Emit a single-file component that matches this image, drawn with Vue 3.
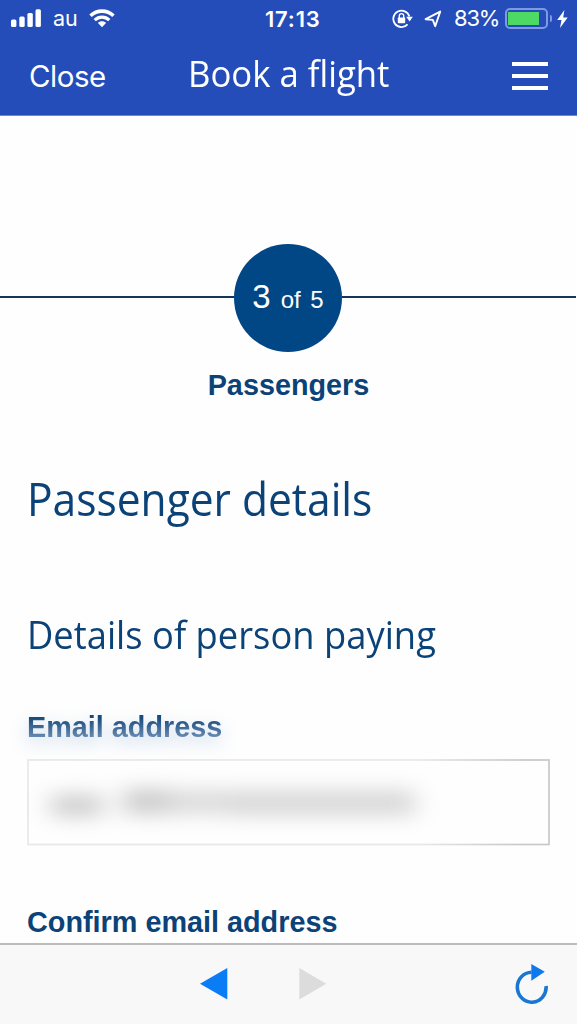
<script setup>
const step = 3
const totalSteps = 5
const battery = 83
</script>

<template>
  <div class="phone">
    <header class="header">
      <div class="status">
        <div class="status-left">
          <svg class="signal" width="31" height="19" viewBox="0 0 31 19">
            <rect x="0" y="10.5" width="5.4" height="7.5" rx="1.5" fill="#fff" />
            <rect x="8.3" y="7.5" width="5.4" height="10.5" rx="1.5" fill="#fff" />
            <rect x="16.4" y="4" width="5.4" height="14" rx="1.5" fill="#fff" />
            <rect x="24.5" y="0.3" width="5.4" height="17.7" rx="1.5" fill="#fff" />
          </svg>
          <span class="carrier">au</span>
          <svg class="wifi" width="26" height="19" viewBox="0 0 26 19">
            <path d="M1.5 6.8C8 .6 18 .6 24.5 6.8" fill="none" stroke="#fff" stroke-width="3.6" />
            <path d="M5.7 11.2c4.2-4 10.4-4 14.6 0" fill="none" stroke="#fff" stroke-width="3.2" />
            <path d="M13 18.2l-4.2-4.4c2.4-2.1 6-2.1 8.4 0z" fill="#fff" />
          </svg>
        </div>
        <span class="time">17:13</span>
        <div class="status-right">
          <svg width="21" height="20" viewBox="0 0 21 20">
            <path d="M17.4 7.6A8.2 8.2 0 1 0 15.6 15.4" fill="none" stroke="#fff" stroke-width="1.8" />
            <path d="M14.2 7.8h6.6l-3.2 4.6z" fill="#fff" />
            <rect x="5.8" y="8.4" width="7.4" height="5.8" rx="0.8" fill="#fff" />
            <path d="M7.3 9V6.8a2.2 2.2 0 0 1 4.4 0V9" fill="none" stroke="#fff" stroke-width="1.4" />
          </svg>
          <svg class="location" width="18" height="18" viewBox="0 0 18 18">
            <path d="M1.6 9.2L16.2 1.6 11.2 16.2 8.8 9.9z" fill="none" stroke="#fff" stroke-width="1.9" stroke-linejoin="round" />
          </svg>
          <span class="percent">{{ battery }}%</span>
          <div class="battery">
            <div class="level" :style="{ width: battery + '%' }"></div>
          </div>
          <i class="cap"></i>
          <svg class="bolt" width="11" height="18" viewBox="0 0 11 18">
            <path d="M7.4 0L.2 10h4.3L3 18l7.7-10.6H6.2z" fill="#fff" />
          </svg>
        </div>
      </div>
      <nav class="nav">
        <a class="close">Close</a>
        <h1 class="title"><span>Book a flight</span></h1>
        <div class="menu"><i></i><i></i><i></i></div>
      </nav>
    </header>

    <main class="content">
      <div class="progress">
        <div class="line"></div>
        <div class="circle">
          <span class="current">{{ step }}</span>
          <span class="total">of {{ totalSteps }}</span>
        </div>
        <div class="line"></div>
      </div>
      <p class="step-name"><span>Passengers</span></p>
      <h2><span>Passenger details</span></h2>
      <h3><span>Details of person paying</span></h3>
      <label class="email-label"><span>Email address</span></label>
      <div class="field">
        <svg width="523" height="87" viewBox="0 0 523 87">
          <defs>
            <linearGradient id="edge" gradientUnits="userSpaceOnUse" x1="0" y1="0" x2="523" y2="0">
              <stop offset="0" stop-color="#e8e8e8" />
              <stop offset="0.75" stop-color="#e8e8e8" />
              <stop offset="0.88" stop-color="#d2d2d2" />
              <stop offset="0.95" stop-color="#c8c8c8" />
              <stop offset="1" stop-color="#c8c8c8" />
            </linearGradient>
            <filter id="soft" x="-20%" y="-200%" width="140%" height="500%">
              <feGaussianBlur stdDeviation="12 10" />
            </filter>
          </defs>
          <rect x="1" y="1" width="521" height="84.5" fill="#fefefe" stroke="url(#edge)" stroke-width="1.7" />
          <g filter="url(#soft)" fill="#000">
            <rect x="24" y="36" width="52" height="21" opacity="0.2" />
            <rect x="96" y="30" width="46" height="25" opacity="0.2" />
            <rect x="142" y="31" width="60" height="24" opacity="0.14" />
            <rect x="202" y="31" width="186" height="26" opacity="0.15" />
          </g>
        </svg>
      </div>
      <label class="confirm-label"><span>Confirm email address</span></label>
    </main>

    <footer class="toolbar">
      <svg class="back" width="28" height="32" viewBox="0 0 28 32">
        <path d="M27.3 0v31.5L0 15.7z" fill="#0a7cf6" />
      </svg>
      <svg class="forward" width="28" height="32" viewBox="0 0 28 32">
        <path d="M.3 0v31.5L27.3 15.7z" fill="#dcdcdc" />
      </svg>
      <svg class="reload" width="34" height="40" viewBox="0 0 34 40">
        <path d="M16.5 8.2A14.4 15 0 1 0 31.1 22" fill="none" stroke="#1976d2" stroke-width="3.6" />
        <path d="M16.3 0v16.8L29.8 7.8z" fill="#0f78ec" />
      </svg>
    </footer>
  </div>
</template>

<style>
body {
  background: #fff;
}
</style>

<style scoped>
.phone {
  width: 577px;
  height: 1024px;
  overflow: hidden;
  display: flex;
  flex-direction: column;
  background: #fefefe;
  color: #0b4378;
  font-family: "Liberation Sans", Arial, sans-serif;
}
svg {
  display: block;
  flex: none;
}
h1, h2, h3, p {
  margin: 0;
  font-weight: normal;
}
.header {
  height: 116px;
  box-sizing: border-box;
  border-bottom: 1px solid #6f86c4;
  background: #244dba;
  color: #fff;
}
.status {
  height: 37px;
  display: grid;
  grid-template-columns: 1fr auto 1fr;
  align-items: center;
  font-family: Inter, sans-serif;
}
.status-left {
  display: flex;
  align-items: center;
  padding-left: 11px;
}
.carrier {
  font-size: 21.5px;
  margin-left: 11px;
  width: 25px;
  padding-bottom: 1px;
}
.wifi {
  margin-left: 11px;
}
.time {
  font-size: 22px;
  font-weight: 600;
  width: 56px;
  margin-left: 9px;
  letter-spacing: 0.8px;
  line-height: 36px;
  white-space: nowrap;
}
.status-right {
  display: flex;
  align-items: center;
  justify-content: flex-end;
  padding-right: 9px;
}
.location {
  margin-left: 11px;
}
.percent {
  font-size: 22px;
  letter-spacing: -1.2px;
  width: 45px;
  margin: 0 6px 0 12px;
  padding-bottom: 1px;
}
.battery {
  width: 43px;
  height: 21px;
  box-sizing: border-box;
  border: 2px solid #7f9ae2;
  border-radius: 5px;
  padding: 2px 1px;
}
.level {
  height: 13px;
  background: #4cd964;
}
.cap {
  width: 2px;
  height: 7px;
  margin: 0 5px 0 2px;
  border-radius: 0 3px 3px 0;
  background: #7f9ae2;
}
.nav {
  height: 77px;
  display: flex;
  align-items: center;
}
.close {
  width: 159px;
  padding-left: 29px;
  font-family: Inter, sans-serif;
  font-size: 29.5px;
  letter-spacing: -0.5px;
}
.title {
  flex: 1;
  font-family: "Open Sans", sans-serif;
  font-size: 37px;
  line-height: 64px;
  padding-bottom: 6px;
}
.title span, h2 span, h3 span {
  display: inline-block;
  white-space: nowrap;
  transform-origin: left;
}
.title span {
  transform: scaleX(0.938);
}
.menu {
  width: 36px;
  margin-right: 29px;
  display: grid;
  gap: 8px;
}
.menu i {
  height: 4px;
  background: #fff;
}
.content {
  height: 827px;
  overflow: hidden;
}
.progress {
  margin-top: 127.5px;
  display: flex;
  align-items: center;
  padding-right: 1px;
}
.line {
  flex: 1;
  height: 2px;
  margin-bottom: 2px;
  background: #14355f;
}
.circle {
  width: 108px;
  height: 108px;
  border-radius: 50%;
  background: #014785;
  color: #fff;
  display: flex;
  align-items: baseline;
  justify-content: center;
  gap: 10px;
  line-height: 105px;
  white-space: nowrap;
}
.current {
  font-size: 33px;
}
.total {
  font-size: 24px;
  word-spacing: 3px;
}
.step-name {
  margin-top: 13.5px;
  line-height: 40px;
  text-align: center;
  font-size: 28.8px;
  font-weight: bold;
}
h2 {
  margin: 61px 0 0 27px;
  font-family: "Open Sans", sans-serif;
  font-size: 46px;
  line-height: 64px;
}
h2 span {
  transform: scaleX(0.924);
}
h3 {
  margin: 74px 0 0 27px;
  font-family: "Open Sans", sans-serif;
  font-size: 39px;
  line-height: 60px;
}
h3 span {
  transform: scaleX(0.932);
}
label {
  display: block;
  margin-left: 27px;
  font-size: 28.8px;
  line-height: 40px;
  font-weight: bold;
}
.email-label {
  margin-top: 43px;
  filter: drop-shadow(0 6px 9px #c3d4ea);
}
.email-label span {
  color: transparent;
  background: linear-gradient(#174a7e 20%, #6a8db3 85%);
  background-clip: text;
}
.field {
  margin: 12px 0 0 27px;
  height: 87px;
}
.confirm-label {
  margin-top: 56px;
}
.toolbar {
  height: 81px;
  box-sizing: border-box;
  border-top: 2px solid #bcbcbc;
  background: #f8f8f8;
  display: flex;
  padding-left: 200px;
}
.back {
  margin-top: 23px;
}
.forward {
  margin: 23px 0 0 71px;
}
.reload {
  margin: 19px 0 0 188px;
}
</style>
